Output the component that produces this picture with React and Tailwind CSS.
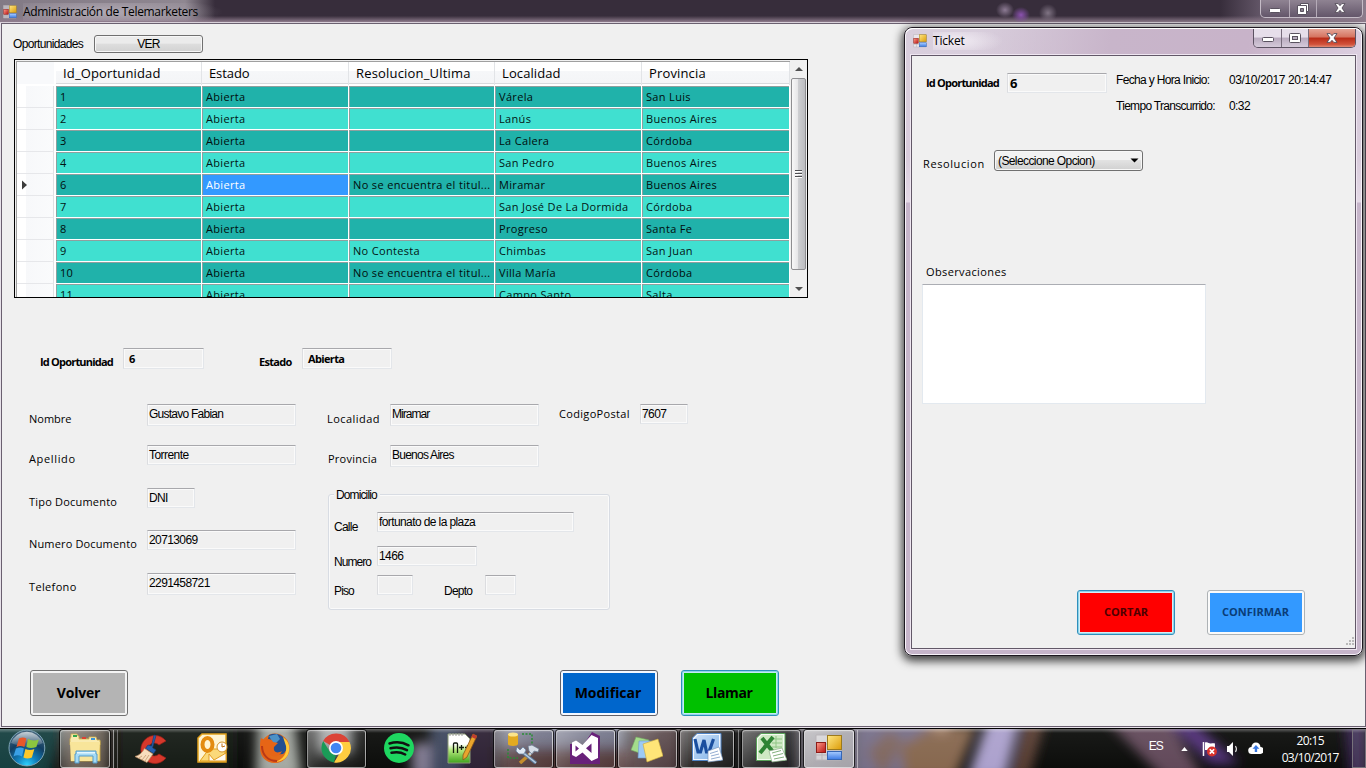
import React from "react";

const SEGOE = "font-['Open_Sans',sans-serif]";
const MSSANS = "font-['Liberation_Sans',sans-serif]";

function FormsIcon({ className }) {
  return (
    <svg viewBox="0 0 28 28" className={className}>
      <path d="M1 1h25v25H1zM1 10h12M13 10v16M13 17h13M7 18v8M1 21h12" fill="#ffffff" fillOpacity=".45" stroke="#b9b5b9" strokeWidth="1" />
      <rect x="12.5" y="1.5" width="14" height="14" fill="url(#fy)" stroke="#9c7a1d" />
      <rect x="1.5" y="8.5" width="9" height="10" fill="url(#fr)" stroke="#8d1c18" />
      <rect x="12.5" y="17.5" width="14" height="8" fill="url(#fb)" stroke="#3566b5" />
      <defs>
        <linearGradient id="fy" x2="1" y2="1"><stop stopColor="#ffe784" /><stop offset="1" stopColor="#dc9c08" /></linearGradient>
        <linearGradient id="fr" x2="1" y2="1"><stop stopColor="#ff9c8c" /><stop offset="1" stopColor="#b81410" /></linearGradient>
        <linearGradient id="fb" x2="0" y2="1"><stop stopColor="#a8ccff" /><stop offset="1" stopColor="#3b7ae4" /></linearGradient>
      </defs>
    </svg>
  );
}

function Field({ className = "", children }) {
  return (
    <div className={`shrink-0 border border-t-[#a8a8ac] border-l-[#dcdde0] border-r-[#e3e6ea] border-b-[#e3e6ea] bg-[#f0f0f0] shadow-[inset_0_0_0_1px_#fafafa] whitespace-nowrap overflow-hidden ${className}`}>
      {children}
    </div>
  );
}

const valueText = `${MSSANS} text-[12px] leading-[19px] pl-px text-black`;
const labelText = `${SEGOE} text-[11px] leading-[14px] text-black whitespace-nowrap`;
const smallText = `${MSSANS} text-[12px] leading-[14px] text-black whitespace-nowrap`;
const boldText = `${SEGOE} font-bold leading-[14px] text-black whitespace-nowrap`;

const rows = [
  ["1", "Abierta", "", "Várela", "San Luis"],
  ["2", "Abierta", "", "Lanús", "Buenos Aires"],
  ["3", "Abierta", "", "La Calera", "Córdoba"],
  ["4", "Abierta", "", "San Pedro", "Buenos Aires"],
  ["6", "Abierta", "No se encuentra el titul...", "Miramar", "Buenos Aires"],
  ["7", "Abierta", "", "San José De La Dormida", "Córdoba"],
  ["8", "Abierta", "", "Progreso", "Santa Fe"],
  ["9", "Abierta", "No Contesta", "Chimbas", "San Juan"],
  ["10", "Abierta", "No se encuentra el titul...", "Villa María", "Córdoba"],
  ["11", "Abierta", "", "Campo Santo", "Salta"],
];
const headers = [
  ["Id_Oportunidad", "tracking-[0.15px]"],
  ["Estado", "tracking-[-0.1px]"],
  ["Resolucion_Ultima", "tracking-[0.18px]"],
  ["Localidad", "tracking-[0.1px]"],
  ["Provincia", "tracking-[0.15px]"],
];
const cols = "grid grid-cols-[146px_147px_146px_147px_148px]";

function DataGrid() {
  return (
    <div className="ml-3 flex h-[239px] w-[794px] shrink-0 border border-black bg-[#f0f0f0] overflow-hidden">
      <div className="mt-[1px] ml-[1px] w-[774px] border-t border-l border-[#a0a0a0] bg-white overflow-hidden">
        <div className="flex h-[24px]">
          <div className="h-[22px] w-[37px] bg-[#f8f9fb]" />
          <div className={`${cols} ml-[2px] h-[22px] border-b border-[#d8dadd] bg-[linear-gradient(#fff_45%,#f6f7f9_45%,#f4f5f7)]`}>
            {headers.map(([h, t]) => (
              <div key={h} className={`${SEGOE} ${t} border-r border-[#e2e4e7] pl-[7px] text-[13px] leading-[23px] text-black whitespace-nowrap`}>{h}</div>
            ))}
          </div>
        </div>
        {rows.map((r, i) => (
          <div key={r[0]} className="flex h-[22px]">
            <div className="flex h-[22px] w-[37px] items-center border-b border-r border-b-[#e6e7ea] border-r-[#dfe0e3] bg-[linear-gradient(90deg,#fff_9px,#f7f8fa_9px,#fafbfc)]">
              {r[0] === "6" && (
                <svg viewBox="0 0 5 10" className="ml-[5px] h-[10px] w-[5px]"><path d="M0 .5 5 5 0 9.5z" fill="#3c3c3c" /></svg>
              )}
            </div>
            <div className={`${cols} ml-[2px]`}>
              {r.map((c, j) => (
                <div
                  key={j}
                  className={`${SEGOE} mr-px mb-px overflow-hidden border-l border-t border-[#8f9f9e] pl-[3px] text-[11px] leading-[20px] whitespace-nowrap ${c.length > 24 ? "tracking-[0.36px]" : "tracking-[0.33px]"} ${r[0] === "6" && j === 1 ? "bg-[#3399ff] text-white" : i % 2 ? "bg-[#40e0d0] text-[#021513]" : "bg-[#20b2aa] text-[#010d0c]"}`}
                >
                  {c}
                </div>
              ))}
            </div>
          </div>
        ))}
      </div>
      <div className="flex w-[17px] flex-col items-center bg-[#f0f0f0]">
        <svg viewBox="0 0 8 4" className="mt-[7px] h-[4px] w-[8px]"><path d="M0 4 4 0l4 4z" fill="#505050" /></svg>
        <div className="mt-[7px] flex h-[192px] w-[15px] flex-col items-center justify-center gap-px rounded-[2px] border border-[#8e8e91] bg-[linear-gradient(90deg,#f8f8f8,#e6e6e8_45%,#cdced1_50%,#bcbdc1)]">
          <i className="h-[2px] w-[7px] border-t border-[#4e4e52] bg-white" />
          <i className="h-[2px] w-[7px] border-t border-[#4e4e52] bg-white" />
          <i className="h-[2px] w-[7px] border-t border-[#4e4e52] bg-white" />
        </div>
        <svg viewBox="0 0 8 4" className="mt-[17px] h-[4px] w-[8px]"><path d="M0 0 4 4l4-4z" fill="#505050" /></svg>
      </div>
    </div>
  );
}

function BigButton({ className = "", size = "h-[46px]", border, fill, children }) {
  return (
    <button className={`flex ${size} w-[98px] shrink-0 rounded-[3px] border p-[2px] ${border} ${className}`}>
      <span className={`flex h-full w-full items-center justify-center ${fill} ${SEGOE} font-bold`}>{children}</span>
    </button>
  );
}

function LeftRow({ label, labelClass = "", row, field, value, valueClass = "" }) {
  return (
    <div className={`flex items-start ${row}`}>
      <div className={`${labelText} w-[118px] shrink-0 ${labelClass}`}>{label}</div>
      <Field className={field}><div className={`${valueText} ${valueClass}`}>{value}</div></Field>
    </div>
  );
}

function WinGlyph({ kind }) {
  if (kind === "min")
    return <svg viewBox="0 0 12 6" className="mt-[4px] h-[6px] w-[12px]"><rect x=".5" y=".5" width="11" height="4" rx="1" fill="#fff" stroke="#5a5360" /></svg>;
  if (kind === "restore")
    return (
      <svg viewBox="0 0 12 12" className="h-[12px] w-[12px]">
        <path d="M3.500.5h8v8h-8z" fill="#fff" stroke="#5a5360" />
        <path d="M.5 2.500h9v9h-9z" fill="#fff" stroke="#5a5360" />
        <path d="M3.500 5.500h3v3h-3z" fill="#8b8190" stroke="#5a5360" />
      </svg>
    );
  if (kind === "max")
    return (
      <svg viewBox="0 0 12 10" className="h-[10px] w-[12px]">
        <rect x=".5" y=".5" width="11" height="9" rx="1" fill="#fff" stroke="#5a5360" />
        <rect x="3.500" y="3.500" width="5" height="3" fill="#b9adc0" stroke="#5a5360" />
      </svg>
    );
  return (
    <svg viewBox="0 0 12 10" className="h-[10px] w-[12px]">
      <path d="M1 .6h3.200L6 2.700 7.800.6H11L8 5l3 4.400H7.800L6 7.300 4.200 9.400H1L4 5z" fill="#fff" stroke="#544c58" strokeWidth=".9" />
    </svg>
  );
}

function MainForm() {
  return (
    <div className="flex h-[704px] flex-col border border-[#6a6070] ml-px bg-[#f0f0f0]">
      <div className="flex h-[35px] shrink-0 items-start">
        <div className={`${smallText} ml-[11px] mt-[13px] w-[81px] tracking-[-0.67px]`}>Oportunidades</div>
        <button className={`${MSSANS} mt-[11px] h-[18px] w-[109px] rounded-[3px] border border-[#707070] bg-[linear-gradient(#ebebeb_45%,#dddddd_50%,#d2d2d2)] text-[12px] leading-[17px] shadow-[inset_0_0_0_1px_#f7f7f7] text-black tracking-[-0.8px]`}>VER</button>
      </div>
      <DataGrid />
      <div className="mt-[50px] ml-[38px] flex h-[56px] shrink-0 items-start">
        <div className={`${boldText} mt-[7px] w-[83px] text-[11px] tracking-[-0.8px]`}>Id Oportunidad</div>
        <Field className="h-[21px] w-[81px]"><div className={`${boldText} pl-[5px] text-[11px] leading-[19px]`}>6</div></Field>
        <div className={`${boldText} mt-[7px] ml-[55px] w-[43px] text-[11px] tracking-[-0.7px]`}>Estado</div>
        <Field className="h-[21px] w-[90px]"><div className={`${boldText} pl-[5px] text-[11px] leading-[19px] tracking-[-0.65px]`}>Abierta</div></Field>
      </div>
      <div className="ml-[27px] flex h-[266px] shrink-0">
        <div className="w-[298px]">
          <LeftRow label="Nombre" row="h-[41px]" labelClass="mt-[8px]" field="h-[22px] w-[149px]" value="Gustavo Fabian" valueClass="tracking-[-0.75px]" />
          <LeftRow label="Apellido" row="h-[43px]" labelClass="mt-[7px] tracking-[0.65px]" field="h-[20px] w-[149px]" value="Torrente" valueClass="pl-[2px] tracking-[-0.55px]" />
          <LeftRow label="Tipo Documento" row="h-[42px]" labelClass="mt-[7px] tracking-[0.2px]" field="h-[20px] w-[48px]" value="DNI" valueClass="tracking-[-0.7px]" />
          <LeftRow label="Numero Documento" row="h-[43px]" labelClass="mt-[7px] tracking-[0.15px]" field="h-[20px] w-[149px]" value="20713069" valueClass="tracking-[-0.6px]" />
          <LeftRow label="Telefono" row="h-[30px]" labelClass="mt-[7px] tracking-[0.35px]" field="h-[22px] w-[149px]" value="2291458721" valueClass="tracking-[-0.6px]" />
        </div>
        <div className="w-[400px]">
          <div className="flex h-[41px] items-start">
            <div className={`${labelText} mt-[8px] w-[63px] tracking-[0.45px]`}>Localidad</div>
            <Field className="h-[22px] w-[149px]"><div className={`${valueText} pl-[2px] tracking-[-0.95px]`}>Miramar</div></Field>
            <div className={`${labelText} mt-[3px] ml-[20px] w-[81px] tracking-[0.33px]`}>CodigoPostal</div>
            <Field className="h-[20px] w-[48px]"><div className={`${valueText} pl-[2px] tracking-[-0.6px]`}>7607</div></Field>
          </div>
          <div className="flex h-[49px] items-start">
            <div className={`${labelText} mt-[7px] w-[62px] ml-px tracking-[0.25px]`}>Provincia</div>
            <Field className="h-[22px] w-[149px]"><div className={`${valueText} pl-[2px] tracking-[-0.75px]`}>Buenos Aires</div></Field>
          </div>
          <fieldset className="relative ml-px h-[116px] w-[282px] rounded-[3px] border border-[#d8dce3] shadow-[inset_0_0_0_1px_#fafafa]">
            <div className={`${smallText} absolute left-[5px] top-[-7px] bg-[#f0f0f0] pl-[2px] pr-[3px] tracking-[-0.88px]`}>Domicilio</div>
            <div className="ml-[5px] mt-[17px] flex h-[34px] items-start">
              <div className={`${smallText} mt-[8px] w-[43px] tracking-[-0.75px]`}>Calle</div>
              <Field className="h-[20px] w-[197px]"><div className={`${valueText} tracking-[-0.6px]`}>fortunato de la plaza</div></Field>
            </div>
            <div className="ml-[5px] flex h-[29px] items-start">
              <div className={`${smallText} mt-[9px] w-[43px] tracking-[-0.95px]`}>Numero</div>
              <Field className="h-[20px] w-[100px]"><div className={`${valueText} pl-[2px] tracking-[-0.6px]`}>1466</div></Field>
            </div>
            <div className="ml-[5px] flex items-start">
              <div className={`${smallText} mt-[9px] w-[43px] tracking-[-0.85px]`}>Piso</div>
              <Field className="h-[20px] w-[36px]" />
              <div className={`${smallText} mt-[9px] ml-[31px] w-[41px] tracking-[-0.75px]`}>Depto</div>
              <Field className="h-[20px] w-[31px]" />
            </div>
          </fieldset>
        </div>
      </div>
      <div className="ml-[28px] flex text-[14px] text-black">
        <BigButton border="border-[#707070] bg-[#f4f4f4]" fill="bg-[#b4b4b4] pr-px pb-[2px] tracking-[-0.2px]">Volver</BigButton>
        <BigButton className="ml-[432px]" border="border-[#606068] bg-[#f4f8ff]" fill="bg-[#0066cc] pr-[2px] pb-[2px]">Modificar</BigButton>
        <BigButton className="ml-[23px]" border="border-[#2f8fbb] bg-[#c4e9f4] shadow-[inset_0_0_0_1px_#8fd3e9]" fill="bg-[#00c000] pr-[2px] pb-[2px] tracking-[-0.4px]">Llamar</BigButton>
      </div>
    </div>
  );
}

function TicketWindow() {
  return (
    <div className="absolute left-[904px] top-[27px] flex h-[629px] w-[459px] flex-col rounded-[8px] border border-[#1d1820] bg-[linear-gradient(#d9cfdd_0,#d8cbdb_130px,#e4d9e6_174px,#c6b5ca_175px,#c6b5ca)] shadow-[0_3px_10px_2px_rgba(0,0,0,0.75),inset_0_0_0_1px_#f7f2f8]">
      <div className="flex h-[27px] shrink-0 items-start rounded-t-[7px] border-t border-white bg-[linear-gradient(100deg,transparent_15%,#c8b5ca_45%,#c8b3c9_75%,#dccfe0)] mx-px">
        <FormsIcon className="ml-[7px] mt-[5px] h-[14px] w-[14px]" />
        <div className={`${SEGOE} ml-[6px] mt-[3px] w-[320px] bg-[radial-gradient(ellipse_50px_14px_at_20px_9px,#f3eef5,transparent)] text-[12px] leading-[18px] text-black tracking-[-0.2px]`}>Ticket</div>
        <div className="flex h-[19px] w-[103px] overflow-hidden rounded-b-[5px] border border-t-0 border-[#5c5262]">
          <div className="flex w-[28px] items-center justify-center border-r border-[#776c7c] bg-[linear-gradient(#e6deea_45%,#b9abbf_50%,#d5cada)]"><WinGlyph kind="min" /></div>
          <div className="flex w-[27px] items-center justify-center border-r border-[#776c7c] bg-[linear-gradient(#e6deea_45%,#b9abbf_50%,#d5cada)]"><WinGlyph kind="max" /></div>
          <div className="flex flex-1 items-center justify-center bg-[linear-gradient(#e5a496_0,#d5735f_45%,#b92b17_50%,#d1513a_85%,#e08a75)]"><WinGlyph kind="close" /></div>
        </div>
      </div>
      <div className="ml-[6px] flex h-[594px] w-[445px] flex-col border border-[#625868] bg-[#f0f0f0] shadow-[0_0_0_1px_#efe6f1]">
        <div className="flex h-[94px] shrink-0 items-start">
          <div className={`${boldText} ml-[14px] mt-[20px] w-[81px] text-[11px] tracking-[-0.8px]`}>Id Oportunidad</div>
          <Field className="mt-[17px] h-[20px] w-[100px]"><div className={`${boldText} pl-[2px] text-[13px] leading-[18px]`}>6</div></Field>
          <div className={`${smallText} mt-[17px] ml-[9px] grid grid-cols-[113px_110px] gap-y-[12px]`}>
            <div className="tracking-[-0.66px]">Fecha y Hora Inicio:</div>
            <div className="tracking-[-0.4px]">03/10/2017 20:14:47</div>
            <div className="tracking-[-0.7px]">Tiempo Transcurrido:</div>
            <div className="tracking-[-0.6px]">0:32</div>
          </div>
        </div>
        <div className="ml-[11px] flex h-[115px] shrink-0 items-start">
          <div className={`${labelText} mt-[7px] w-[71px] tracking-[0.6px]`}>Resolucion</div>
          <div className={`${smallText} flex h-[21px] w-[149px] items-center justify-between rounded-[3px] border border-[#707070] bg-[linear-gradient(#f2f2f2_45%,#e2e2e2_50%,#d0d0d0)] pl-[3px] pr-[3px] tracking-[-0.6px] shadow-[inset_0_0_0_1px_#f8f8f8]`}>
            (Seleccione Opcion)
            <svg viewBox="0 0 9 5" className="h-[5px] w-[9px]"><path d="M.5.5h8l-4 4z" fill="#000" /></svg>
          </div>
        </div>
        <div className={`${labelText} ml-[14px] shrink-0 tracking-[0.38px]`}>Observaciones</div>
        <div className="ml-[10px] mt-[5px] h-[120px] w-[284px] shrink-0 border border-[#e3e9ef] border-t-[#abadb3] bg-white" />
        <div className="ml-[165px] mt-[186px] flex shrink-0 text-[11px]">
          <BigButton size="h-[45px]" border="border-[#2f8fbb] bg-[#d5eef6] shadow-[inset_0_0_0_1px_#8fd3e9]" fill="bg-[#ff0000] text-[#4d0000]">CORTAR</BigButton>
          <BigButton size="h-[45px]" className="ml-[32px]" border="border-[#adb2b5] bg-[#fafafa]" fill="bg-[#3399ff] text-[#0a3d78] pr-px">CONFIRMAR</BigButton>
        </div>
        <svg viewBox="0 0 9 9" className="ml-[433px] mt-[2px] h-[9px] w-[9px] shrink-0"><path d="M7 0h2v2H7zM4 3h2v2H4zM7 3h2v2H7zM1 6h2v2H1zM4 6h2v2H4zM7 6h2v2H7z" fill="#b9b9b9" /></svg>
      </div>
    </div>
  );
}

function Task({ className, active, children }) {
  return (
    <div className={`mt-px flex h-[38px] shrink-0 items-center justify-center ${active ? "rounded-[3px] border border-[#ffffff80] bg-[linear-gradient(135deg,#ffffff60,#ffffff20_50%,#ffffff08)] shadow-[0_0_0_1px_#000000b0]" : ""} ${className}`}>
      {children}
    </div>
  );
}

const big = "h-[32px] w-[32px] mb-[2px]";

function Taskbar() {
  return (
    <div className="relative h-[40px] overflow-hidden border-t border-black bg-[#0c0d0b]">
      <svg viewBox="0 0 1366 40" className="absolute inset-0 h-[40px] w-[1366px]" preserveAspectRatio="none">
        <defs>
          <filter id="soft" x="-20%" y="-20%" width="140%" height="140%"><feGaussianBlur stdDeviation="6" /></filter>
          <linearGradient id="gloss" x2="0" y2="1"><stop stopColor="#fff" stopOpacity=".35" /><stop offset=".1" stopColor="#fff" stopOpacity=".05" /><stop offset="1" stopColor="#fff" stopOpacity="0" /></linearGradient>
        </defs>
        <g filter="url(#soft)">
          <path d="M-20-10H65L50 50H-20z" fill="#12403f" />
          <path d="M64-10h44v60H64z" fill="#5e5346" />
          <path d="M118-10h115v60H118z" fill="#161c15" />
          <path d="M258-10h36l8 60h-46z" fill="#a4a9a3" />
          <path d="M318-10h34v34h-34z" fill="#96999a" />
          <path d="M412 14h20v36h-20z" fill="#827c93" />
          <path d="M430-10h30v60h-30z" fill="#414a5e" />
          <path d="M460-10h36v60h-36z" fill="#2d2036" />
          <path d="M500-10h125v30H500z" fill="#66677e" />
          <path d="M500 18h180v32H500z" fill="#4b3033" />
          <path d="M630-10h50v60h-50z" fill="#4c373b" />
          <path d="M690-10h110v60H690z" fill="#141314" />
          <path d="M800-10h60v60h-60z" fill="#6a6670" />
          <path d="M858-10h80v60h-80z" fill="#77708a" />
          <path d="M868 22l20-20 15 8-20 40z" fill="#80685f" />
          <path d="M900 18l35-22h42l-22 54h-50z" fill="#87684f" />
          <path d="M922-10h34l-14 16z" fill="#b08f79" />
          <path d="M988-10h32l-15 60h-38z" fill="#aca1cd" />
          <path d="M1024-10h22l-18 60h-18z" fill="#5b4034" />
          <path d="M1105-10h64l35 60h-40z" fill="#62495a" />
          <path d="M1165-10h25l50 45h-30z" fill="#53307a" />
          <path d="M1344-10h22v60h-16z" fill="#35204e" />
        </g>
        <path d="M0 0h1366v40H0z" fill="url(#gloss)" />
      </svg>
      <div className="relative flex h-[40px] items-start">
        <svg viewBox="0 0 40 40" className="ml-[7px] mt-[-1px] h-[40px] w-[40px]">
          <defs>
            <radialGradient id="orb" cx=".5" cy=".98" r=".95"><stop stopColor="#2ed4ff" /><stop offset=".3" stopColor="#1180bd" /><stop offset=".65" stopColor="#123f63" /><stop offset="1" stopColor="#45657c" /></radialGradient>
            <linearGradient id="orbTop" x2="0" y2="1"><stop stopColor="#fff" stopOpacity=".7" /><stop offset="1" stopColor="#fff" stopOpacity=".1" /></linearGradient>
          </defs>
          <circle cx="20" cy="20" r="18" fill="url(#orb)" stroke="#7fa5b6" strokeWidth="1" />
          <path d="M4 15a17 17 0 0 1 32 0c-8 5-22 4-32 0z" fill="url(#orbTop)" />
          <path d="M12 10.500c3-1.500 5-1.500 7.500 0L17.500 19c-3-1.500-5-1.500-8 0z" fill="#e8582a" />
          <path d="M21 11c3 1.500 7 2 11 .5L29.500 19c-4 1.500-7 1.500-10 0z" fill="#8dc63f" />
          <path d="M9 20.500c3-1.500 5.500-1.500 8 0L15 28.500c-3-1.500-5.500-1.500-8.500 0z" fill="#3aa0e6" />
          <path d="M18.500 21c3 1.500 6 1.500 9 0L25 29.500c-3 1.500-6 1.500-8.500 0z" fill="#fdc829" />
        </svg>
        <Task active className="ml-[13px] w-[50px]">
          <svg viewBox="0 0 32 32" className={big}>
            <path d="M2 5h7l2 2h8l2 2h10v20H2z" fill="#f4dc84" stroke="#c9a73f" strokeWidth=".8" />
            <path d="M2 5V2h6l1 2h1v3h10V5h7l1 3h3v5H1V7z" fill="#f9ebb0" stroke="#cdae50" strokeWidth=".8" />
            <path d="M4 3h4v2H4z" fill="#32a64b" /><path d="M13 5h4v2h-4z" fill="#db4234" /><path d="M22 6h4v2h-4z" fill="#3d94d8" />
            <path d="M1 10h30L29 29H2z" fill="#f8e59a" />
            <path d="M7 19h20v3h1v9h-4v-7H10v7H6v-9h1z" fill="#a4daf5" stroke="#559bc9" />
            <path d="M8 20h18v1.500H8z" fill="#e4f7ff" />
          </svg>
        </Task>
        <i className="mt-px h-[38px] w-[4px] border-r border-[#ffffff88]" /><i className="mt-px h-[38px] w-[4px] border-r border-[#ffffff55]" />
        <Task className="ml-[17px] w-[33px]">
          <svg viewBox="0 0 32 32" className={big}>
            <path d="M31 9A14 14 0 1 0 31 26l-7-4a6.500 6.500 0 1 1 0-9z" fill="#d6382b" stroke="#9c1f17" strokeWidth=".7" />
            <path d="M19 3l2 .7-3.500 12 3.500 2.300-2.500 3.500-8-5 2.500-3.500 3.500 1z" fill="#2560af" stroke="#173d79" strokeWidth=".7" />
            <path d="M9.500 16.500l8.500 5.500-6 8.500L0 24.500c4-1 7.500-4 9.500-8z" fill="#f8ddbd" stroke="#bd8e63" strokeWidth=".7" />
            <path d="M4 26l3-2M7 28l4-5M10 29l4-6" stroke="#c49970" strokeWidth=".8" />
          </svg>
        </Task>
        <Task className="ml-[28px] w-[32px]">
          <svg viewBox="0 0 32 32" className={big}>
            <path d="M6 2h24v28H2V6z" fill="#fff4d2" stroke="#e1a11c" strokeWidth="1.500" />
            <path d="M13 17h16v12H4z" fill="#fbd97a" stroke="#e19f19" />
            <ellipse cx="11.500" cy="12.500" rx="5" ry="6.500" fill="none" stroke="#e38b10" strokeWidth="4" />
            <circle cx="26" cy="15" r="5" fill="#fff" stroke="#d2932a" /><path d="M26 11.500V15l3-1" fill="none" stroke="#c36f12" />
            <path d="M13 22l5 6 12-7v8H13z" fill="#fffaf0" stroke="#e39d22" />
          </svg>
        </Task>
        <Task className="ml-[31px] w-[32px]">
          <svg viewBox="0 0 32 32" className={big}>
            <circle cx="16" cy="16" r="14.500" fill="#e36b19" />
            <path d="M10 3a14 14 0 0 1 15 3c5 6 3 13-1 16l-11 1-6-9z" fill="#234f91" />
            <path d="M10 4l8-2 3 5-6 6z" fill="#4c91c6" />
            <path d="M2 6c2 1 3 2 4 2 3-2 7-1 8 2l5 1-4 4c-1 5 3 7 8 4-2 6-9 7-13 3 2 7 12 9 18 0l2-5C30 25 24 31 16 31 6 31 1 24 1 16c0-4 0-7 1-10z" fill="#e66516" />
            <path d="M24 5c5 4 7 8 6 14-1 7-7 11-14 11 9-3 12-9 11-16z" fill="#ffc938" />
            <path d="M3 14c0 9 6 15 15 15" fill="none" stroke="#b93916" strokeWidth="2" />
          </svg>
        </Task>
        <Task active className="ml-[16px] w-[59px]">
          <svg viewBox="0 0 32 32" className={big}>
            <path d="M16 1.500A14.500 14.500 0 0 1 29.500 10H16l-6 3L3.200 9A14.500 14.500 0 0 1 16 1.500z" fill="#db4437" />
            <path d="M3.200 9 10 20l6 3-2 7.400A14.500 14.500 0 0 1 3.200 9z" fill="#1a9b57" />
            <path d="M29.500 10A14.500 14.500 0 0 1 14 30.400L21 19l-1-9z" fill="#ffcd40" />
            <circle cx="16" cy="16" r="7" fill="#fff" /><circle cx="16" cy="16" r="5.300" fill="#4285f4" />
          </svg>
        </Task>
        <Task className="ml-[17px] w-[32px]">
          <svg viewBox="0 0 32 32" className={big}>
            <circle cx="16" cy="16" r="15" fill="#1ed760" />
            <path d="M6.500 11.500c6.500-2 13.500-1.300 19 1.800M7.500 16.300c6-1.600 11.500-1 16.500 1.800M8.500 20.800c5-1.200 9.500-.7 13.700 1.700" fill="none" stroke="#111" strokeWidth="2.500" strokeLinecap="round" />
          </svg>
        </Task>
        <Task className="ml-[30px] w-[32px]">
          <svg viewBox="0 0 32 32" className={big}>
            <defs><linearGradient id="np" x2="0" y2="1"><stop offset=".35" stopColor="#fff" /><stop offset=".55" stopColor="#b5e97e" /><stop offset="1" stopColor="#3fa31c" /></linearGradient></defs>
            <path d="M3 2h17l5 5v24H3z" fill="url(#np)" stroke="#8b9a77" />
            <path d="M5 1v3M8 1v3M11 1v3M14 1v3M17 1v3" stroke="#999" />
            <path d="M8.500 21v-9q0-1 1-1h2q1 0 1 1v9M14 15.500h5M16.500 13v5M20 15.500h5M22.500 13v5" fill="none" stroke="#141b11" strokeWidth="1.300" />
            <path d="M28 2l4 2-10 21-4 3v-5z" fill="#e9a52d" stroke="#8d5517" strokeWidth=".8" /><path d="M28 2l4 2-1.500 3-4-2z" fill="#c03c31" />
          </svg>
        </Task>
        <Task active className="ml-[17px] w-[59px]">
          <svg viewBox="0 0 32 32" className={big}>
            <path d="M1 2v10c0 2.500 10 2.500 10 0V2z" fill="#e2aa21" /><ellipse cx="6" cy="2.500" rx="5" ry="2" fill="#fbe48b" />
            <path d="M15 2h10v10M1 17v9h10" fill="none" stroke="#2a8c36" strokeWidth="1.500" strokeDasharray="2 1.500" />
            <path d="M13 31l10-9" stroke="#c48d2c" strokeWidth="3.500" /><path d="M22 23l7-7" stroke="#c2cedb" strokeWidth="2.500" /><path d="M21 14l4-1 7 4-1 3-4-1-2 3-3-3z" fill="#d7dee8" stroke="#69798c" strokeWidth=".7" />
            <path d="M14 19l15 12" stroke="#5f7c9c" strokeWidth="3.500" /><path d="M14 19l15 12" stroke="#b9cde2" strokeWidth="1.500" /><path d="M10 15l3 3 3-3 3 3-2 4h-5l-3-3z" fill="#dfe8f3" stroke="#607b9c" strokeWidth=".7" />
          </svg>
        </Task>
        <Task active className="ml-[3px] w-[59px]">
          <svg viewBox="0 0 32 32" className={big}>
            <path d="M23 0l8 4v28H1V12h7l5 3z" fill="#68217a" />
            <path d="M22.500 3l6.500 3v20l-6.500 3-9-8.500L7 25l-4-2V10.500L7 8.500l6.500 4.500zM6.500 13.500v6l3.500-3zM22.500 11.500L17 16.300l5.500 4.700z" fill="#fff" fillRule="evenodd" />
          </svg>
        </Task>
        <Task active className="ml-[3px] w-[59px]">
          <svg viewBox="0 0 32 32" className={big}>
            <path d="M5 5l13 3-4 15L0 18z" fill="#a4dc8c" stroke="#76aa62" strokeWidth=".6" />
            <path d="M8 9h16v17H7z" fill="#9dcaf4" stroke="#6c99ca" strokeWidth=".6" />
            <path d="M12 12l15-5 5 17-16 6z" fill="#ffe578" stroke="#c8a83c" strokeWidth=".6" />
          </svg>
        </Task>
        <Task active className="ml-[3px] w-[54px]">
          <svg viewBox="0 0 32 32" className={big}>
            <defs><linearGradient id="wd" x2="1" y2="1"><stop stopColor="#cfe2f8" /><stop offset="1" stopColor="#7fb2e8" /></linearGradient></defs>
            <path d="M6 1.500h24v27H1.500V6z" fill="#f3f8fe" stroke="#4f83c5" />
            <path d="M7 3h21v24H3V7z" fill="url(#wd)" />
            <path d="M4 7l3 13h2.500L13 8l2.500 12H18l4.500-13" fill="none" stroke="#1a4f9f" strokeWidth="3.200" />
            <path d="M17 19l11-4 4 13-15 2z" fill="#fff" stroke="#7996bc" strokeWidth=".7" /><path d="M19 21.500l8-2.500M20 24l8-2M20 27l9-2" stroke="#7898c5" strokeWidth=".8" />
          </svg>
        </Task>
        <i className="mt-px h-[38px] w-[5px] border-r border-[#ffffff66]" />
        <Task active className="ml-[3px] w-[58px]">
          <svg viewBox="0 0 32 32" className={big}>
            <path d="M6 1.500h24v27H1.500V6z" fill="#f4fbf1" stroke="#58a157" />
            <path d="M7 3h21v24H3V7z" fill="#cfe9c4" />
            <path d="M17 7h10M17 11h10M17 15h10M21 4v12" stroke="#8fc585" />
            <path d="M7 6l11 14M18 5L5 21" stroke="#2f8434" strokeWidth="4" />
            <path d="M14 19l13-3 5 12-15 2z" fill="#fff" stroke="#8caf88" strokeWidth=".7" /><path d="M17 21l9-2.500M18 24l10-2.500M19 27l10-2" stroke="#75a76f" strokeWidth=".9" />
          </svg>
        </Task>
        <Task active className="ml-[4px] w-[50px] bg-[#ffffff60]"><FormsIcon className="mb-[2px] h-[28px] w-[28px]" /></Task>
        <i className="mt-px h-[38px] w-[4px] border-r border-[#ffffff77]" />
        <div className="ml-[291px] mt-[10px] font-['Liberation_Sans',sans-serif] text-[12px] leading-[15px] text-white tracking-[-1px]">ES</div>
        <svg viewBox="0 0 8 5" className="ml-[18px] mt-[18px] h-[4px] w-[7px]"><path d="M0 5 4 0l4 5z" fill="#fff" /></svg>
        <svg viewBox="0 0 16 16" className="ml-[13px] mt-[12px] h-[16px] w-[16px]">
          <path d="M2.500 1v14" stroke="#fff" strokeWidth="1.500" /><path d="M4 1.500c3-1 4 1.500 6 1s3-.5 4 0V9H4z" fill="#fff" />
          <circle cx="11" cy="10.500" r="5" fill="#d9322b" /><path d="M8.800 8.300l4.400 4.400M13.200 8.300l-4.400 4.400" stroke="#fff" strokeWidth="1.600" />
        </svg>
        <svg viewBox="0 0 14 14" className="ml-[9px] mt-[13px] h-[14px] w-[14px]"><path d="M1 4h2l4-4v14L3 10H1z" fill="#fff" /><path d="M9.500 4q2 3 0 6" fill="none" stroke="#ddd" strokeWidth="1.200" /></svg>
        <svg viewBox="0 0 16 14" className="ml-[8px] mt-[12px] h-[14px] w-[16px]"><path d="M4 13a3.500 3.500 0 0 1-.5-7 4.500 4.500 0 0 1 9 0A3.500 3.500 0 0 1 12 13z" fill="#fff" /><path d="M8 4l3.500 3.700H9.200V11H6.800V7.700H4.500z" fill="#3877e0" /></svg>
        <div className={`${SEGOE} ml-[15px] mt-[3px] w-[64px] text-center text-[12px] leading-[17px] text-white`}>
          <div className="tracking-[-0.6px]">20:15</div>
          <div className="whitespace-nowrap tracking-[-0.65px]">03/10/2017</div>
        </div>
        <div className="ml-[10px] h-[39px] w-[14px] border border-[#77727b] bg-[#ffffff18]" />
      </div>
    </div>
  );
}

export default function App() {
  return (
    <div className="relative flex h-[768px] w-[1366px] flex-col overflow-hidden bg-[#e8e2ea]">
      <div className="flex h-[23px] items-start border-b border-[#d8d0d9] bg-[radial-gradient(ellipse_9px_8px_at_1021px_15px,#8c52b0,transparent),radial-gradient(ellipse_9px_8px_at_1005px_10px,#8d7b94,transparent),radial-gradient(ellipse_9px_9px_at_1048px_13px,#807484,transparent),linear-gradient(transparent_72%,#8f7c8d),linear-gradient(90deg,#827a85_0,#8f8791_185px,#372d3b_215px,#372d3b_1220px,#77697c_1280px,#8a7b8b)]">
        <FormsIcon className="ml-[3px] mt-[5px] h-[14px] w-[14px]" />
        <div className={`${SEGOE} ml-[6px] mt-[3px] w-[1237px] bg-[radial-gradient(ellipse_120px_16px_at_80px_9px,#c5bdc7aa,transparent)] text-[12px] leading-[18px] tracking-[-0.33px] text-black`}>Administración de Telemarketers</div>
        <div className="flex h-[18px] w-[103px] overflow-hidden rounded-b-[5px] border border-t-0 border-[#c5bcc7] bg-[linear-gradient(#8f8392,#63566a)]">
          <div className="flex w-[29px] items-center justify-center border-r border-[#b5abb8]"><WinGlyph kind="min" /></div>
          <div className="flex w-[27px] items-center justify-center border-r border-[#b5abb8]"><WinGlyph kind="restore" /></div>
          <div className="flex flex-1 items-center justify-center pb-[2px]"><WinGlyph kind="close" /></div>
        </div>
      </div>
      <MainForm />
      <div className="h-px bg-[#e8e2ea]" />
      <Taskbar />
      <TicketWindow />
    </div>
  );
}
